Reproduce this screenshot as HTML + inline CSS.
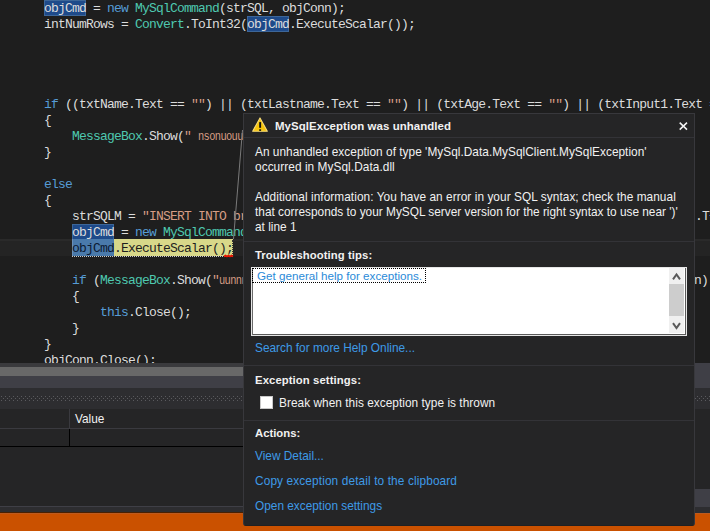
<!DOCTYPE html>
<html><head><meta charset="utf-8">
<style>
*{margin:0;padding:0;box-sizing:border-box}
html,body{width:710px;height:531px;overflow:hidden;background:#1e1e1e}
body{position:relative;font-family:"Liberation Sans",sans-serif}
.code{position:absolute;left:0;top:0px;width:710px;height:363px;overflow:hidden;font-family:"Liberation Mono",monospace;font-size:13px;letter-spacing:-0.8px;line-height:16px;color:#dcdcdc}
.ln{position:absolute;left:44px;white-space:pre;height:16px;margin-top:1px}
.th{display:inline-block;transform:scaleX(0.8);transform-origin:0 0}
.k{color:#569cd6}.t{color:#4ec9b0}.s{color:#d69d85}
.curline{position:absolute;left:0;top:239px;width:710px;height:17px;background:#242424;border-top:2px solid #2a2a2a}
.hl{position:absolute;background:#1e4a8a;border:1px solid #3d6698}
.dlg{position:absolute;left:243px;top:113px;width:452px;height:413px;background:#252526;border:1px solid #38383c;border-bottom-color:#202022;border-radius:0 0 3px 3px;color:#f1f1f1;font-size:11.85px}
.abs{position:absolute;white-space:pre}
.b{font-weight:bold;font-size:11.3px}
.lnk{color:#3e9ae6}
.sep{position:absolute;left:0;width:450px;height:1px;background:#333337}
</style></head><body>
<div class="code">
  <div class="curline"></div>
  <div class="hl" style="left:44px;top:0px;width:42px;height:16px"></div>
  <div class="hl" style="left:247px;top:16px;width:42px;height:16px"></div>
  <div class="hl" style="left:72px;top:224px;width:42px;height:16px"></div>
  <div style="position:absolute;left:72px;top:239px;width:42px;height:17px;background:#4a7aab;border-left:1px solid #6a8fb8"></div>
  <div style="position:absolute;left:114px;top:239px;width:119px;height:17px;background:#d8d889"></div>
  <div style="position:absolute;left:72px;top:256px;width:161px;height:1px;border-top:1px dotted #c8c8c8"></div><div style="position:absolute;left:232px;top:240px;width:1px;height:16px;border-left:1px dotted #333"></div>
  <div class="ln" style="top:0px">objCmd = <span class="k">new</span> <span class="t">MySqlCommand</span>(strSQL, objConn);</div>
  <div class="ln" style="top:16px">intNumRows = <span class="t">Convert</span>.ToInt32(objCmd.ExecuteScalar());</div>
  <div class="ln" style="top:96px"><span class="k">if</span> ((txtName.Text == <span class="s">""</span>) || (txtLastname.Text == <span class="s">""</span>) || (txtAge.Text == <span class="s">""</span>) || (txtInput1.Text ==</div>
  <div class="ln" style="top:112px">{</div>
  <div class="ln" style="top:128px">    <span class="t">MessageBox</span>.Show(<span class="s">" <span class="th">nsonuouu</span></span></div>
  <div class="ln" style="top:144px">}</div>
  <div class="ln" style="top:176px"><span class="k">else</span></div>
  <div class="ln" style="top:192px">{</div>
  <div class="ln" style="top:208px">    strSQLM = <span class="s">"INSERT INTO br</span></div>
  <div class="ln" style="top:224px">    objCmd = <span class="k">new</span> <span class="t">MySqlCommand</span></div>
  <div class="ln" style="top:240px;color:#1e1e1e">    <span style="color:#0c1a33">objCmd</span>.ExecuteScalar();</div>
  <div class="ln" style="top:272px">    <span class="k">if</span> (<span class="t">MessageBox</span>.Show(<span class="s">"<span class="th">uunnn</span></span></div>
  <div class="ln" style="top:288px">    {</div>
  <div class="ln" style="top:304px">        <span class="k">this</span>.Close();</div>
  <div class="ln" style="top:320px">    }</div>
  <div class="ln" style="top:336px">}</div>
  <div class="ln" style="top:352px">objConn.Close();</div>
  <div class="abs" style="left:695px;top:209px">.T<span class="k">+</span></div>
  <div class="abs" style="left:694px;top:273px">n)</div>
</div>
<!-- scrollbar / panels -->
<div style="position:absolute;left:0;top:363px;width:710px;height:4px;background:#3a3a3d"></div>
<div style="position:absolute;left:0;top:367px;width:710px;height:9px;background:#686868"></div>
<div style="position:absolute;left:0;top:376px;width:710px;height:12px;background:#3f3f46"></div>
<div style="position:absolute;left:0;top:388px;width:710px;height:21px;background:#2d2d30"></div>
<svg style="position:absolute;left:0;top:396px" width="710" height="5"><defs><pattern id="dots" width="4" height="4" patternUnits="userSpaceOnUse"><rect x="1" y="0" width="1" height="1" fill="#5a5a5e"/><rect x="3" y="2" width="1" height="1" fill="#5a5a5e"/></pattern></defs><rect width="710" height="5" fill="url(#dots)"/></svg>
<div style="position:absolute;left:0;top:409px;width:710px;height:20px;background:#252526;border-bottom:1px solid #3a3a3f"></div>
<div style="position:absolute;left:69px;top:409px;width:1px;height:19px;background:#3a3a3f"></div>
<div class="abs" style="left:75px;top:412px;font-size:11.85px;color:#f1f1f1">Value</div>
<div style="position:absolute;left:0;top:429px;width:710px;height:18px;background:#252526;border-bottom:1px solid #000"></div>
<div style="position:absolute;left:69px;top:429px;width:1px;height:17px;background:#000"></div>
<div style="position:absolute;left:0;top:447px;width:710px;height:59px;background:#252526"></div>
<div style="position:absolute;left:0;top:506px;width:710px;height:7px;background:#2d2d30;border-top:1px solid #3f3f46"></div>
<div style="position:absolute;left:0;top:512px;width:710px;height:1px;background:#4a2000"></div>
<div style="position:absolute;left:0;top:513px;width:710px;height:18px;background:#ca5100;border-top:1px solid #bd5a1e"></div>
<!-- right strip -->
<div style="position:absolute;left:694px;top:363px;width:16px;height:25px;background:#3f3f46"></div>
<div style="position:absolute;left:694px;top:409px;width:16px;height:80px;background:#252526"></div>
<div style="position:absolute;left:694px;top:489px;width:16px;height:18px;background:#3f3f46"></div>
<div style="position:absolute;left:694px;top:507px;width:16px;height:6px;background:#2d2d30"></div>
<!-- connector -->
<svg style="position:absolute;left:0;top:0" width="710" height="531"><line x1="242.5" y1="130" x2="233.5" y2="239" stroke="#7a7a7a" stroke-width="1"/><path d="M224 256.5 L225.5 255.5 L227 256.5 L228.5 255.5 L230 256.5 L231.5 255.5 L233 256.5" fill="none" stroke="#e51400" stroke-width="1.6"/></svg>
<!-- dialog -->
<div class="dlg">
  <svg style="position:absolute;left:8px;top:3px" width="17" height="17" viewBox="0 0 17 17"><path d="M8 0.9 L15.3 14.3 L0.7 14.3 Z" fill="#f6c40c" stroke="#f8dc78" stroke-width="1.1" stroke-linejoin="round"/><rect x="7.2" y="5.1" width="1.9" height="5.7" fill="#111"/><rect x="7.2" y="12.3" width="1.9" height="1.6" fill="#111"/></svg>
  <div class="abs b" style="left:31px;top:6px;font-size:11.45px;letter-spacing:0.07px">MySqlException was unhandled</div>
  <svg style="position:absolute;left:435px;top:8px" width="9" height="9" viewBox="0 0 9 9"><path d="M0.7 0.6 L8 7.6 M8 0.6 L0.7 7.6" stroke="#f4f4f4" stroke-width="1.5"/></svg>
  <div class="sep" style="top:23px"></div>
  <div class="abs" style="left:11px;top:31px;line-height:15px;letter-spacing:0.028px">An unhandled exception of type 'MySql.Data.MySqlClient.MySqlException'</div>
  <div class="abs" style="left:11px;top:46px;line-height:15px;letter-spacing:0.06px">occurred in MySql.Data.dll</div>
  <div class="abs" style="left:11px;top:76px;line-height:15px;letter-spacing:0.058px">Additional information: You have an error in your SQL syntax; check the manual</div>
  <div class="abs" style="left:11px;top:91px;line-height:15px">that corresponds to your MySQL server version for the right syntax to use near ')'</div>
  <div class="abs" style="left:11px;top:106px;line-height:15px">at line 1</div>
  <div class="sep" style="top:127px"></div>
  <div class="abs b" style="left:11px;top:135px;letter-spacing:0.085px">Troubleshooting tips:</div>
  <div style="position:absolute;left:7px;top:153px;width:436px;height:69px;background:#fff;border:1px solid #e6e6e6;box-shadow:inset 1px 0 0 #6a6a6a,inset -1px 0 0 #5a5a5a,inset 0 -1px 0 #5a5a5a"></div>
  <div style="position:absolute;left:425px;top:154px;width:15px;height:65px;background:#f0f0f0"></div>
  <div style="position:absolute;left:425px;top:170px;width:15px;height:32px;background:#cdcdcd"></div>
  <svg style="position:absolute;left:425px;top:154px" width="15" height="65" viewBox="0 0 15 65"><path d="M4 11.3 L7.5 6.5 L11 11.3" fill="none" stroke="#5a5a5a" stroke-width="2"/><path d="M4 55.2 L7.5 60 L11 55.2" fill="none" stroke="#5a5a5a" stroke-width="2"/></svg>
  <div style="position:absolute;left:8px;top:154px;width:174px;height:15px;border:1px dotted #000"></div>
  <div class="abs lnk" style="left:13px;top:155px;font-size:11.65px;color:#2a8ad8">Get general help for exceptions.</div>
  <div class="abs lnk" style="left:11px;top:227px">Search for more Help Online...</div>
  <div class="sep" style="top:251px"></div>
  <div class="abs b" style="left:11px;top:260px;letter-spacing:0.094px">Exception settings:</div>
  <div style="position:absolute;left:16px;top:282px;width:13px;height:13px;background:#fff;border:1px solid #c8c8c8"></div>
  <div class="abs" style="left:35px;top:282px;letter-spacing:0.038px">Break when this exception type is thrown</div>
  <div class="sep" style="top:306px"></div>
  <div class="abs b" style="left:11px;top:313px">Actions:</div>
  <div class="abs lnk" style="left:11px;top:335px">View Detail...</div>
  <div class="abs lnk" style="left:11px;top:360px;letter-spacing:0.12px">Copy exception detail to the clipboard</div>
  <div class="abs lnk" style="left:11px;top:385px">Open exception settings</div>
</div>
</body></html>
